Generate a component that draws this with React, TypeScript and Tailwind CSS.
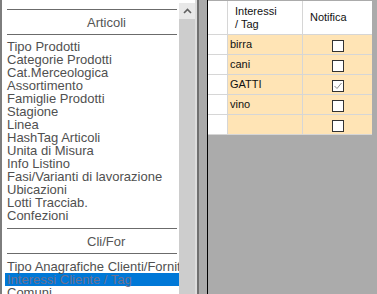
import React from 'react';

const articoli = [
  'Tipo Prodotti',
  'Categorie Prodotti',
  'Cat.Merceologica',
  'Assortimento',
  'Famiglie Prodotti',
  'Stagione',
  'Linea',
  'HashTag Articoli',
  'Unita di Misura',
  'Info Listino',
  'Fasi/Varianti di lavorazione',
  'Ubicazioni',
  'Lotti Tracciab.',
  'Confezioni',
];

const cliFor = ['Tipo Anagrafiche Clienti/Fornitori', 'Interessi Cliente / Tag', 'Comuni'];

const rows = [
  { tag: 'birra', on: false },
  { tag: 'cani', on: false },
  { tag: 'GATTI', on: true },
  { tag: 'vino', on: false },
  { tag: '', on: false },
];

function Section({ title }: { title: string }) {
  return (
    <div className="mx-[2px] border-y border-[#6b6b6b] pt-[6px] pb-[5px] pl-[80px] leading-[13px] text-[#555]">
      {title}
    </div>
  );
}

function Item({ label, selected }: { label: string; selected?: boolean }) {
  return (
    <div
      className={
        'h-[13px] px-[2px] leading-[13px] whitespace-nowrap ' +
        (selected ? 'bg-[#0078d7] text-[#6c7190]' : 'text-[#505050]')
      }
    >
      {label}
    </div>
  );
}

function Check({ on }: { on: boolean }) {
  return (
    <div className="mt-[2px] flex h-[12px] w-[12px] items-center justify-center border border-[#333] bg-white">
      {on && (
        <svg width="10" height="10" viewBox="0 0 10 10">
          <polyline points="1.5,5 4,7.5 8.5,2" fill="none" stroke="#8a8a8a" strokeWidth="1" />
        </svg>
      )}
    </div>
  );
}

export default function App() {
  return (
    <div
      className="flex h-[294px] w-[377px] overflow-hidden bg-[#ababab] text-[13px]"
      style={{ fontFamily: '"Liberation Sans", Arial, sans-serif' }}
    >
      {/* left list panel */}
      <div className="flex w-[197px] shrink-0 border-l-2 border-[#7d7d7d] bg-white">
        <div className="w-[177px] overflow-hidden pt-[9px] pl-[3px]">
          <Section title="Articoli" />
          <div className="mt-[5px]">
            {articoli.map((a) => (
              <Item key={a} label={a} />
            ))}
          </div>
          <div className="mt-[6px]">
            <Section title="Cli/For" />
          </div>
          <div className="mt-[6px]">
            {cliFor.map((c, i) => (
              <Item key={c} label={c} selected={i === 1} />
            ))}
          </div>
        </div>
        <div className="flex w-[16px] flex-col pt-[3px]">
          <div className="flex h-[16px] items-center justify-center bg-[#e8e8e8]">
            <svg width="9" height="6" viewBox="0 0 9 6">
              <polyline points="1,5 4.5,1.5 8,5" fill="none" stroke="#606060" strokeWidth="1.6" />
            </svg>
          </div>
          <div className="flex-1 bg-[#cdcdcd]" />
        </div>
        <div className="w-[2px] bg-[#dcdcdc]" />
      </div>

      {/* splitter */}
      <div className="w-[2px] shrink-0 bg-[#707070]" />
      <div className="w-[8px] shrink-0 bg-[#aaaaaa]" />
      <div className="w-px shrink-0 bg-black" />

      {/* grid */}
      <div className="pt-px">
        <div className="grid w-[164px] grid-cols-[19px_74px_69px] gap-px bg-[#d6d6d6] pb-px text-[11px] text-[#111]">
          <div className="h-[33px] bg-white" />
          <div className="flex h-[33px] flex-col justify-center bg-white pl-[7px] leading-[13px]">
            <span>Interessi</span>
            <span>/ Tag</span>
          </div>
          <div className="flex h-[33px] items-center bg-white pl-[7px]">Notifica</div>
          {rows.map((r, i) => (
            <React.Fragment key={i}>
              <div className="h-[19px] bg-white" />
              <div className="flex h-[19px] items-center bg-[#ffe4b5] pl-[2px]">{r.tag}</div>
              <div className="flex h-[19px] items-center justify-center bg-[#ffe4b5]">
                <Check on={r.on} />
              </div>
            </React.Fragment>
          ))}
        </div>
      </div>
    </div>
  );
}
